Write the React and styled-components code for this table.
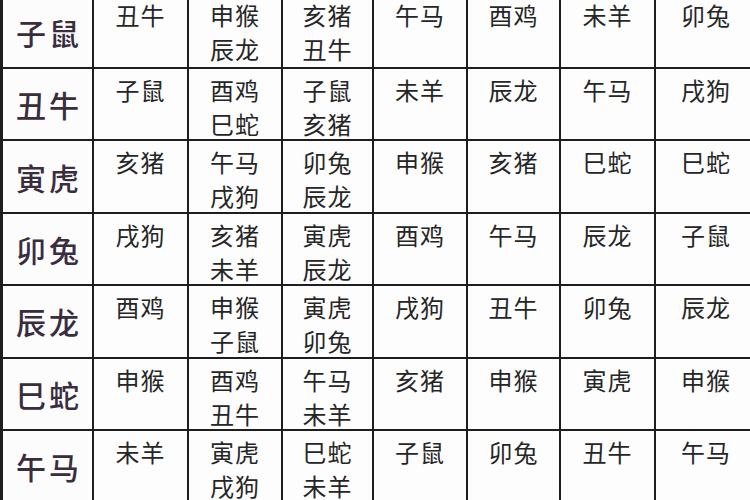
import styled, { createGlobalStyle } from 'styled-components';

const GlobalStyle = createGlobalStyle`
  html, body {
    margin: 0;
    padding: 0;
    background: #fdfdfd;
  }
  body {
    width: 750px;
    height: 500px;
    overflow: hidden;
    font-family: "Noto Sans CJK SC", "Noto Sans", sans-serif;
  }
`;

const Page = styled.div`
  width: 750px;
  height: 500px;
  overflow: hidden;
`;

const Table = styled.div`
  display: grid;
  grid-template-columns: 89px 93px 92px 89px 92px 91px 93px 100px;
  grid-auto-rows: 70.4px;
  gap: 2px;
  width: max-content;
  margin-top: -3.4px;
  padding-left: 3px;
  background: #1e1e1e;
`;

const Label = styled.div`
  background: #fcfcfc;
  display: flex;
  align-items: center;
  justify-content: center;
  font-size: 30px;
  font-weight: 500;
  letter-spacing: 3px;
  color: #3a2d3e;
  padding-left: 3px;
`;

const Cell = styled.div`
  background: #fdfdfd;
  display: flex;
  flex-direction: column;
  align-items: center;
  padding-top: ${(p) => (p.$first ? '1px' : '4px')};
  font-size: 24px;
  line-height: 34px;
  letter-spacing: 1px;
  color: #262626;
`;

const rows = [
  ['子鼠', ['丑牛'], ['申猴', '辰龙'], ['亥猪', '丑牛'], ['午马'], ['酉鸡'], ['未羊'], ['卯兔']],
  ['丑牛', ['子鼠'], ['酉鸡', '巳蛇'], ['子鼠', '亥猪'], ['未羊'], ['辰龙'], ['午马'], ['戌狗']],
  ['寅虎', ['亥猪'], ['午马', '戌狗'], ['卯兔', '辰龙'], ['申猴'], ['亥猪'], ['巳蛇'], ['巳蛇']],
  ['卯兔', ['戌狗'], ['亥猪', '未羊'], ['寅虎', '辰龙'], ['酉鸡'], ['午马'], ['辰龙'], ['子鼠']],
  ['辰龙', ['酉鸡'], ['申猴', '子鼠'], ['寅虎', '卯兔'], ['戌狗'], ['丑牛'], ['卯兔'], ['辰龙']],
  ['巳蛇', ['申猴'], ['酉鸡', '丑牛'], ['午马', '未羊'], ['亥猪'], ['申猴'], ['寅虎'], ['申猴']],
  ['午马', ['未羊'], ['寅虎', '戌狗'], ['巳蛇', '未羊'], ['子鼠'], ['卯兔'], ['丑牛'], ['午马']],
];

export default function App() {
  return (
    <Page>
      <GlobalStyle />
      <Table>
        {rows.map(([name, ...cells], r) => [
          <Label key={name}>{name}</Label>,
          ...cells.map((lines, c) => (
            <Cell key={`${r}-${c}`} $first={r === 0}>
              {lines.map((t) => (
                <span key={t}>{t}</span>
              ))}
            </Cell>
          )),
        ])}
      </Table>
    </Page>
  );
}
